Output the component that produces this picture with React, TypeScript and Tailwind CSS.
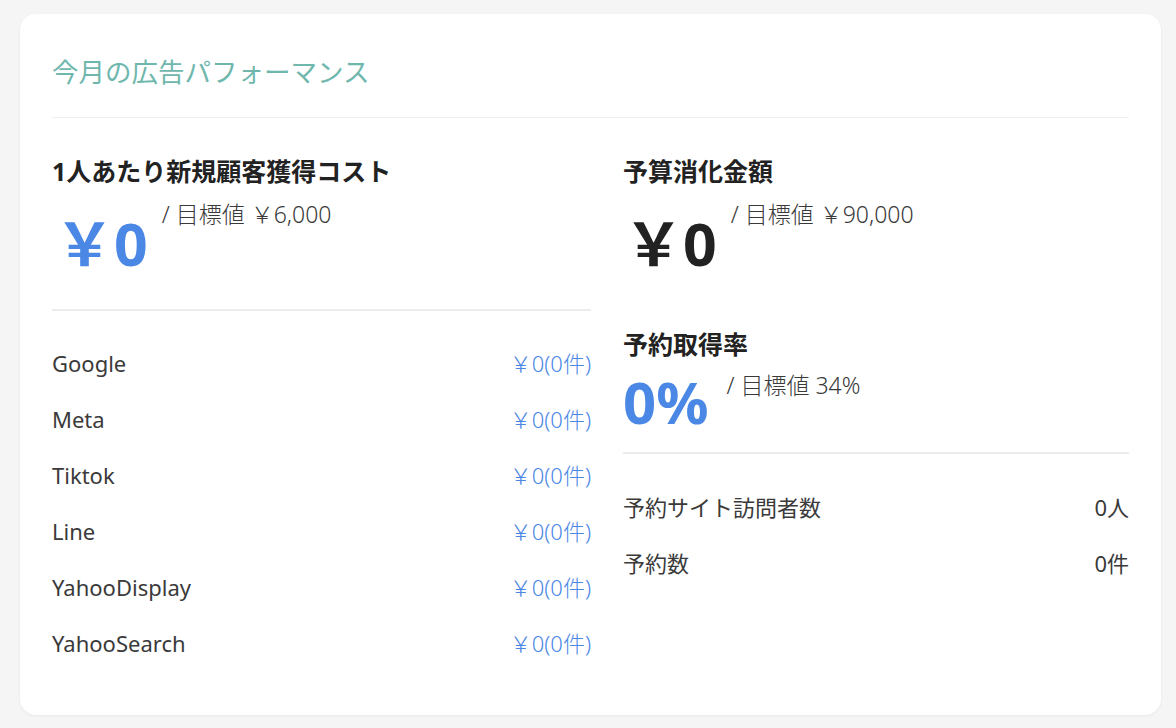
import React from 'react';

const FONT = { fontFamily: '"Noto Sans", "Noto Sans CJK JP", sans-serif' };

const channels = ['Google', 'Meta', 'Tiktok', 'Line', 'YahooDisplay', 'YahooSearch'];

const Target: React.FC<{ text: string }> = ({ text }) => (
  <span className="text-[23px] leading-none text-[#3a3a3a] font-light">{text}</span>
);

const App: React.FC = () => {
  return (
    <div className="min-h-screen bg-[#f5f5f5] px-5 pt-[14px]" style={FONT}>
      <div className="bg-white rounded-[16px] shadow-[0_1px_3px_rgba(0,0,0,0.06)] px-8 pb-[61px] pt-[45px] w-[1141px]">
        <h1 className="text-[26.5px] leading-none font-normal text-[#6fb7ad]">今月の広告パフォーマンス</h1>
        <div className="h-px bg-[#efefef] mt-[31px]" />

        <div className="flex gap-8 mt-[41px]">
          <div className="w-[539px]">
            <h2 className="text-[25px] leading-none font-bold text-[#222]">1人あたり新規顧客獲得コスト</h2>
            <div className="flex items-start mt-[18px]">
              <span className="text-[59px] leading-none font-bold text-[#4b88e6] mt-[12px] pl-[3px]">￥0</span>
              <span className="ml-[14px] mt-[1px]"><Target text="/ 目標値 ￥6,000" /></span>
            </div>
            <div className="h-[2px] bg-[#ececec] mt-[36px]" />
            <div className="pt-[41px] flex flex-col gap-[34px]">
              {channels.map((c) => (
                <div key={c} className="flex justify-between text-[22px] leading-none">
                  <span className="text-[#3a3a3a]">{c}</span>
                  <span className="text-[#4b88e6] font-light">￥0(0件)</span>
                </div>
              ))}
            </div>
          </div>

          <div className="flex-1">
            <h2 className="text-[25px] leading-none font-bold text-[#222]">予算消化金額</h2>
            <div className="flex items-start mt-[18px]">
              <span className="text-[59px] leading-none font-bold text-[#222] mt-[12px] pl-[1px]">￥0</span>
              <span className="ml-[14px] mt-[1px]"><Target text="/ 目標値 ￥90,000" /></span>
            </div>
            <h2 className="text-[25px] leading-none font-bold text-[#222] mt-[59px]">予約取得率</h2>
            <div className="flex items-start mt-[16px]">
              <span className="text-[58px] leading-none font-bold text-[#4b88e6]">0%</span>
              <span className="ml-[18px] mt-[1px]"><Target text="/ 目標値 34%" /></span>
            </div>
            <div className="h-[2px] bg-[#ececec] mt-[21px]" />
            <div className="pt-[42px] flex flex-col gap-[34px]">
              <div className="flex justify-between text-[22px] leading-none text-[#3a3a3a]">
                <span>予約サイト訪問者数</span>
                <span>0人</span>
              </div>
              <div className="flex justify-between text-[22px] leading-none text-[#3a3a3a]">
                <span>予約数</span>
                <span>0件</span>
              </div>
            </div>
          </div>
        </div>
      </div>
    </div>
  );
};

export default App;
